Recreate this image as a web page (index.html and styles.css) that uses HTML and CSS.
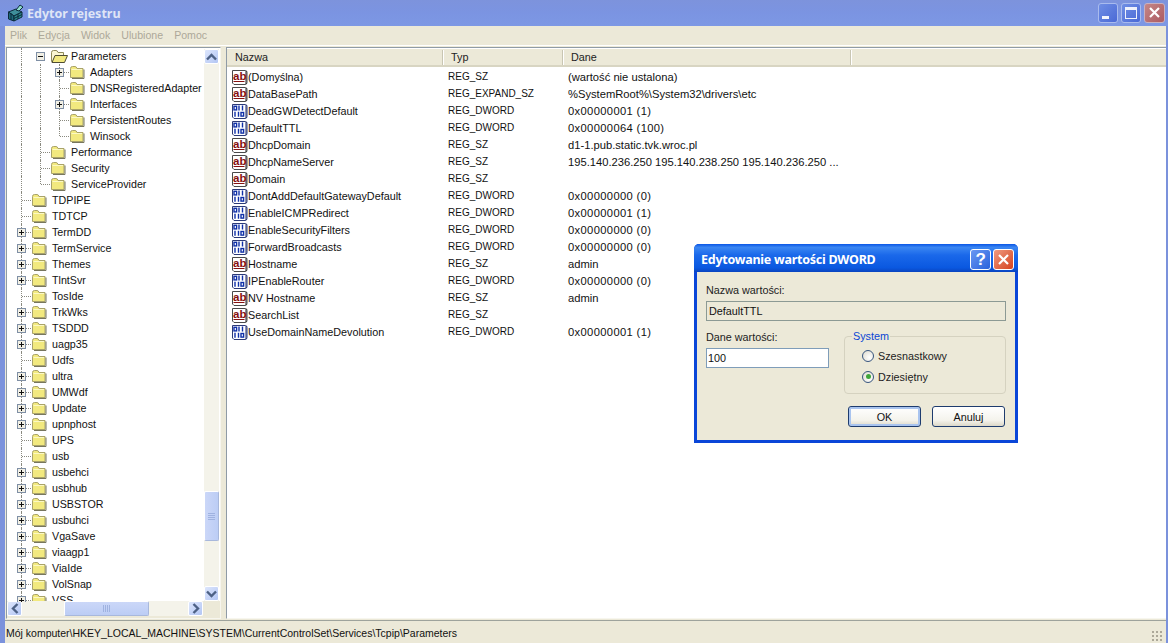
FILE: index.html
```html
<!DOCTYPE html>
<html lang="pl">
<head>
<meta charset="utf-8">
<title>Edytor rejestru</title>
<link rel="stylesheet" href="styles.css">
</head>
<body>
<svg class="defs" width="0" height="0" aria-hidden="true">
  <symbol id="folder" viewBox="0 0 17 16">
    <path d="M1.5 4.5 Q1.5 2.5 3.5 2.5 H6 Q7.5 2.5 8 4.5 H14 V13.5 H1.5 Z" fill="#f2e97f" stroke="#a9a36a"/>
    <path d="M2.5 5.5 H13" stroke="#fbf8c4"/>
    <path d="M15 5.5 V14.5 H3" stroke="#77765e" stroke-width="1" fill="none"/>
  </symbol>
  <symbol id="folder-open" viewBox="0 0 19 16">
    <path d="M1.5 4.5 Q1.5 2.5 3.5 2.5 H6 Q7.5 2.5 8 4.5 H13.5 V13.5 H1.5 Z" fill="#fbf7d2" stroke="#8f8a58"/>
    <path d="M2 14.5 L5 7.5 H17.5 L14.5 14.5 Z" fill="#f2e97f" stroke="#4e4c34"/>
  </symbol>
  <symbol id="reg-sz" viewBox="0 0 17 16">
    <path d="M1.5 1.5 H14.5 Q16 1.5 16 3.5 V13.5 Q16 15.5 14 15.5 H3 L1.5 14 Z" fill="#fff" stroke="#4a4a4a"/>
    <path d="M15 2 V15" stroke="#222"/>
    <text x="2" y="10.5" class="ab">ab</text>
    <path d="M2.5 12.5 H13.5" stroke="#86100f"/>
  </symbol>
  <symbol id="reg-dword" viewBox="0 0 17 16">
    <path d="M1.5 1.5 H14.5 Q16 1.5 16 3.5 V13.5 Q16 15.5 14 15.5 H3 L1.5 14 Z" fill="#fff" stroke="#2c3a78"/>
    <path d="M15 2 V15" stroke="#1c2a68"/>
    <g fill="none" stroke="#0f30a8" stroke-width="1.4">
      <rect x="3" y="3.3" width="2.6" height="3.6"/>
      <path d="M8 2.6 V7.6 M11.5 2.6 V7.6"/>
      <path d="M4 8.8 V13.8 M7.5 8.8 V13.8"/>
      <rect x="10" y="9.5" width="2.6" height="3.6"/>
    </g>
  </symbol>
  <symbol id="plus" viewBox="0 0 9 9">
    <rect x=".5" y=".5" width="8" height="8" fill="#f1efe4" stroke="#7f8fa5"/>
    <path d="M2 4.5 H7 M4.5 2 V7" stroke="#111"/>
  </symbol>
  <symbol id="minus" viewBox="0 0 9 9">
    <rect x=".5" y=".5" width="8" height="8" fill="#f1efe4" stroke="#7f8fa5"/>
    <path d="M2 4.5 H7" stroke="#111"/>
  </symbol>
  <symbol id="arrow-up" viewBox="0 0 11 8"><path d="M1 6.5 L5.5 2 L10 6.5" fill="none" stroke="#4d6185" stroke-width="2.4"/></symbol>
  <symbol id="arrow-down" viewBox="0 0 11 8"><path d="M1 1.5 L5.5 6 L10 1.5" fill="none" stroke="#4d6185" stroke-width="2.4"/></symbol>
  <symbol id="arrow-left" viewBox="0 0 8 11"><path d="M6.5 1 L2 5.5 L6.5 10" fill="none" stroke="#4d6185" stroke-width="2.4"/></symbol>
  <symbol id="arrow-right" viewBox="0 0 8 11"><path d="M1.5 1 L6 5.5 L1.5 10" fill="none" stroke="#4d6185" stroke-width="2.4"/></symbol>
</svg>

<div class="window">
  <header class="titlebar">
    <svg class="app-icon" width="18" height="18" viewBox="0 0 18 18">
      <path d="M1.5 8 L9 5 L15 8 L7 12 Z" fill="#3f8f9a" stroke="#0b2b3a"/>
      <path d="M1.5 8 V15 L7 17 V12 Z" fill="#1f6a7a" stroke="#0b2b3a"/>
      <path d="M7 12 V17 L15 13 V8 Z" fill="#2c8a8e" stroke="#0b2b3a"/>
      <path d="M4 9.5 V16 M11 10 V15 M7 14.5 L15 10.5" stroke="#0b2b3a" fill="none"/>
      <path d="M9 6 L13 1 L16 3 L12 7 Z" fill="#8fdccb" stroke="#0b2b3a"/>
    </svg>
    <span class="title-text">Edytor rejestru</span>
    <div class="win-btns">
      <span class="win-btn"><i class="glyph-min"></i></span>
      <span class="win-btn"><i class="glyph-max"></i></span>
      <span class="win-btn win-close">
        <svg width="13" height="13" viewBox="0 0 13 13"><path d="M2 2 L11 11 M11 2 L2 11" stroke="#fff" stroke-width="2.2"/></svg>
      </span>
    </div>
  </header>

  <nav class="menubar">
    <span>Plik</span><span>Edycja</span><span>Widok</span><span>Ulubione</span><span>Pomoc</span>
  </nav>

  <main class="panes">
    <section class="tree-pane">
      <div class="tree-main">
        <div class="tree">
          <div class="node"><i class="c v"></i><i class="c"><svg class="exp"><use href="#minus"/></svg></i><svg class="fo"><use href="#folder-open"/></svg><span class="label">Parameters</span></div>
          <div class="node"><i class="c v"></i><i class="c v"></i><i class="c t"><svg class="exp"><use href="#plus"/></svg></i><svg class="fi"><use href="#folder"/></svg><span class="label">Adapters</span></div>
          <div class="node"><i class="c v"></i><i class="c v"></i><i class="c t"></i><svg class="fi"><use href="#folder"/></svg><span class="label">DNSRegisteredAdapter</span></div>
          <div class="node"><i class="c v"></i><i class="c v"></i><i class="c t"><svg class="exp"><use href="#plus"/></svg></i><svg class="fi"><use href="#folder"/></svg><span class="label">Interfaces</span></div>
          <div class="node"><i class="c v"></i><i class="c v"></i><i class="c t"></i><svg class="fi"><use href="#folder"/></svg><span class="label">PersistentRoutes</span></div>
          <div class="node"><i class="c v"></i><i class="c v"></i><i class="c l"></i><svg class="fi"><use href="#folder"/></svg><span class="label">Winsock</span></div>
          <div class="node"><i class="c v"></i><i class="c t"></i><svg class="fi"><use href="#folder"/></svg><span class="label">Performance</span></div>
          <div class="node"><i class="c v"></i><i class="c t"></i><svg class="fi"><use href="#folder"/></svg><span class="label">Security</span></div>
          <div class="node"><i class="c v"></i><i class="c l"></i><svg class="fi"><use href="#folder"/></svg><span class="label">ServiceProvider</span></div>
          <div class="node"><i class="c t"></i><svg class="fi"><use href="#folder"/></svg><span class="label">TDPIPE</span></div>
          <div class="node"><i class="c t"></i><svg class="fi"><use href="#folder"/></svg><span class="label">TDTCP</span></div>
          <div class="node"><i class="c t"><svg class="exp"><use href="#plus"/></svg></i><svg class="fi"><use href="#folder"/></svg><span class="label">TermDD</span></div>
          <div class="node"><i class="c t"><svg class="exp"><use href="#plus"/></svg></i><svg class="fi"><use href="#folder"/></svg><span class="label">TermService</span></div>
          <div class="node"><i class="c t"><svg class="exp"><use href="#plus"/></svg></i><svg class="fi"><use href="#folder"/></svg><span class="label">Themes</span></div>
          <div class="node"><i class="c t"><svg class="exp"><use href="#plus"/></svg></i><svg class="fi"><use href="#folder"/></svg><span class="label">TlntSvr</span></div>
          <div class="node"><i class="c t"></i><svg class="fi"><use href="#folder"/></svg><span class="label">TosIde</span></div>
          <div class="node"><i class="c t"><svg class="exp"><use href="#plus"/></svg></i><svg class="fi"><use href="#folder"/></svg><span class="label">TrkWks</span></div>
          <div class="node"><i class="c t"><svg class="exp"><use href="#plus"/></svg></i><svg class="fi"><use href="#folder"/></svg><span class="label">TSDDD</span></div>
          <div class="node"><i class="c t"><svg class="exp"><use href="#plus"/></svg></i><svg class="fi"><use href="#folder"/></svg><span class="label">uagp35</span></div>
          <div class="node"><i class="c t"></i><svg class="fi"><use href="#folder"/></svg><span class="label">Udfs</span></div>
          <div class="node"><i class="c t"><svg class="exp"><use href="#plus"/></svg></i><svg class="fi"><use href="#folder"/></svg><span class="label">ultra</span></div>
          <div class="node"><i class="c t"><svg class="exp"><use href="#plus"/></svg></i><svg class="fi"><use href="#folder"/></svg><span class="label">UMWdf</span></div>
          <div class="node"><i class="c t"><svg class="exp"><use href="#plus"/></svg></i><svg class="fi"><use href="#folder"/></svg><span class="label">Update</span></div>
          <div class="node"><i class="c t"><svg class="exp"><use href="#plus"/></svg></i><svg class="fi"><use href="#folder"/></svg><span class="label">upnphost</span></div>
          <div class="node"><i class="c t"></i><svg class="fi"><use href="#folder"/></svg><span class="label">UPS</span></div>
          <div class="node"><i class="c t"></i><svg class="fi"><use href="#folder"/></svg><span class="label">usb</span></div>
          <div class="node"><i class="c t"><svg class="exp"><use href="#plus"/></svg></i><svg class="fi"><use href="#folder"/></svg><span class="label">usbehci</span></div>
          <div class="node"><i class="c t"><svg class="exp"><use href="#plus"/></svg></i><svg class="fi"><use href="#folder"/></svg><span class="label">usbhub</span></div>
          <div class="node"><i class="c t"><svg class="exp"><use href="#plus"/></svg></i><svg class="fi"><use href="#folder"/></svg><span class="label">USBSTOR</span></div>
          <div class="node"><i class="c t"><svg class="exp"><use href="#plus"/></svg></i><svg class="fi"><use href="#folder"/></svg><span class="label">usbuhci</span></div>
          <div class="node"><i class="c t"><svg class="exp"><use href="#plus"/></svg></i><svg class="fi"><use href="#folder"/></svg><span class="label">VgaSave</span></div>
          <div class="node"><i class="c t"><svg class="exp"><use href="#plus"/></svg></i><svg class="fi"><use href="#folder"/></svg><span class="label">viaagp1</span></div>
          <div class="node"><i class="c t"><svg class="exp"><use href="#plus"/></svg></i><svg class="fi"><use href="#folder"/></svg><span class="label">ViaIde</span></div>
          <div class="node"><i class="c t"><svg class="exp"><use href="#plus"/></svg></i><svg class="fi"><use href="#folder"/></svg><span class="label">VolSnap</span></div>
          <div class="node"><i class="c t"><svg class="exp"><use href="#plus"/></svg></i><svg class="fi"><use href="#folder"/></svg><span class="label">VSS</span></div>
        </div>
        <div class="vscroll">
          <span class="sb-btn"><svg width="11" height="8"><use href="#arrow-up"/></svg></span>
          <div class="vtrack"><span class="vthumb"><i></i><i></i><i></i><i></i></span></div>
          <span class="sb-btn"><svg width="11" height="8"><use href="#arrow-down"/></svg></span>
        </div>
      </div>
      <div class="hscroll-row">
        <div class="hscroll">
          <span class="sb-btn"><svg width="8" height="11"><use href="#arrow-left"/></svg></span>
          <div class="htrack"><span class="hthumb"><i></i><i></i><i></i><i></i></span></div>
          <span class="sb-btn"><svg width="8" height="11"><use href="#arrow-right"/></svg></span>
        </div>
      </div>
    </section>

    <section class="list-pane">
      <div class="list-head">
        <span class="h-name">Nazwa</span><span class="h-type">Typ</span><span class="h-data">Dane</span><span class="h-rest"></span>
      </div>
      <div class="list">
        <div class="item"><span class="name"><svg class="ri"><use href="#reg-sz"/></svg>(Domyślna)</span><span class="type">REG_SZ</span><span class="data">(wartość nie ustalona)</span></div>
        <div class="item"><span class="name"><svg class="ri"><use href="#reg-sz"/></svg>DataBasePath</span><span class="type">REG_EXPAND_SZ</span><span class="data">%SystemRoot%\System32\drivers\etc</span></div>
        <div class="item"><span class="name"><svg class="ri"><use href="#reg-dword"/></svg>DeadGWDetectDefault</span><span class="type">REG_DWORD</span><span class="data num">0x00000001 (1)</span></div>
        <div class="item"><span class="name"><svg class="ri"><use href="#reg-dword"/></svg>DefaultTTL</span><span class="type">REG_DWORD</span><span class="data num">0x00000064 (100)</span></div>
        <div class="item"><span class="name"><svg class="ri"><use href="#reg-sz"/></svg>DhcpDomain</span><span class="type">REG_SZ</span><span class="data">d1-1.pub.static.tvk.wroc.pl</span></div>
        <div class="item"><span class="name"><svg class="ri"><use href="#reg-sz"/></svg>DhcpNameServer</span><span class="type">REG_SZ</span><span class="data">195.140.236.250 195.140.238.250 195.140.236.250 ...</span></div>
        <div class="item"><span class="name"><svg class="ri"><use href="#reg-sz"/></svg>Domain</span><span class="type">REG_SZ</span><span class="data"></span></div>
        <div class="item"><span class="name"><svg class="ri"><use href="#reg-dword"/></svg>DontAddDefaultGatewayDefault</span><span class="type">REG_DWORD</span><span class="data num">0x00000000 (0)</span></div>
        <div class="item"><span class="name"><svg class="ri"><use href="#reg-dword"/></svg>EnableICMPRedirect</span><span class="type">REG_DWORD</span><span class="data num">0x00000001 (1)</span></div>
        <div class="item"><span class="name"><svg class="ri"><use href="#reg-dword"/></svg>EnableSecurityFilters</span><span class="type">REG_DWORD</span><span class="data num">0x00000000 (0)</span></div>
        <div class="item"><span class="name"><svg class="ri"><use href="#reg-dword"/></svg>ForwardBroadcasts</span><span class="type">REG_DWORD</span><span class="data num">0x00000000 (0)</span></div>
        <div class="item"><span class="name"><svg class="ri"><use href="#reg-sz"/></svg>Hostname</span><span class="type">REG_SZ</span><span class="data">admin</span></div>
        <div class="item"><span class="name"><svg class="ri"><use href="#reg-dword"/></svg>IPEnableRouter</span><span class="type">REG_DWORD</span><span class="data num">0x00000000 (0)</span></div>
        <div class="item"><span class="name"><svg class="ri"><use href="#reg-sz"/></svg>NV Hostname</span><span class="type">REG_SZ</span><span class="data">admin</span></div>
        <div class="item"><span class="name"><svg class="ri"><use href="#reg-sz"/></svg>SearchList</span><span class="type">REG_SZ</span><span class="data"></span></div>
        <div class="item"><span class="name"><svg class="ri"><use href="#reg-dword"/></svg>UseDomainNameDevolution</span><span class="type">REG_DWORD</span><span class="data num">0x00000001 (1)</span></div>
      </div>
    </section>
  </main>

  <footer class="statusbar">
    <span>Mój komputer\HKEY_LOCAL_MACHINE\SYSTEM\CurrentControlSet\Services\Tcpip\Parameters</span>
    <i class="grip"></i>
  </footer>
</div>

<div class="dialog">
  <header class="dlg-title">
    <span>Edytowanie wartości DWORD</span>
    <div class="dlg-btns">
      <span class="dlg-btn dlg-help">?</span>
      <span class="dlg-btn dlg-close">
        <svg width="13" height="13" viewBox="0 0 13 13"><path d="M2 2 L11 11 M11 2 L2 11" stroke="#fff" stroke-width="2.2"/></svg>
      </span>
    </div>
  </header>
  <div class="dlg-body">
    <div class="dlg-label">Nazwa wartości:</div>
    <div class="field field-ro">DefaultTTL</div>
    <div class="dlg-split">
      <div class="dlg-data">
        <div class="dlg-label">Dane wartości:</div>
        <div class="field field-edit">100</div>
      </div>
      <fieldset class="group">
        <legend>System</legend>
        <div class="radio"><i class="dot"></i>Szesnastkowy</div>
        <div class="radio"><i class="dot dot-on"></i>Dziesiętny</div>
      </fieldset>
    </div>
    <div class="dlg-actions">
      <span class="btn btn-default"><span>OK</span></span>
      <span class="btn"><span>Anuluj</span></span>
    </div>
  </div>
</div>
</body>
</html>
```
FILE: styles.css
```css
* { box-sizing: border-box; }
html, body { margin: 0; height: 100%; }
body {
  width: 1168px;
  height: 643px;
  overflow: hidden;
  position: relative;
  font: 11px/16px "Liberation Sans", Arial, sans-serif;
  color: #111;
  background: #ece9d8;
}
i { font-style: normal; display: block; }
.defs { position: absolute; }
.ab { font: bold 11.5px "Liberation Sans", sans-serif; fill: #86100f; }

.window {
  height: 643px;
  display: flex;
  flex-direction: column;
  border-left: 5px solid #7b92dc;
  border-right: 2px solid #7b92dc;
}
.titlebar {
  height: 26px;
  margin: 0 -2px 0 -5px;
  padding: 0 3px 0 7px;
  display: flex;
  align-items: center;
  background: linear-gradient(#7d93dc, #7b94e2 50%, #7d98e4);
}
.app-icon { margin-right: 2px; }
.title-text {
  font: bold 12.5px/16px "Noto Sans", sans-serif;
  color: #dfe5f6;
  margin-top: 1px;
}
.win-btns { margin-left: auto; display: flex; gap: 3px; margin-top: -1px; }
.win-btn {
  width: 20px;
  height: 20px;
  border: 1px solid #a9bbee;
  border-radius: 3px;
  background: linear-gradient(135deg, #6f8ee4, #4a69d6);
  display: flex;
  align-items: center;
  justify-content: center;
  position: relative;
}
.win-close { width: 21px; background: linear-gradient(135deg, #c58686, #ac5b62); border-color: #c8b0c0; }
.glyph-min { width: 7px; height: 3px; background: #f2f4fc; margin: 9px 6px 0 0; }
.glyph-max { width: 12px; height: 12px; border: 1px solid #eef1fb; border-top-width: 3px; }

.menubar {
  height: 19px;
  display: flex;
  gap: 11px;
  padding: 1px 0 0 5px;
  background: #ece9d8;
  color: #aca899;
  font-size: 10.6px;
  flex: none;
}
.panes {
  flex: 1;
  min-height: 0;
  display: flex;
  gap: 5px;
  padding: 1px 0 1px 1px;
  background: #ece9d8;
  border-top: 1px solid #fff;
}

/* tree */
.tree-pane {
  width: 215px;
  flex: none;
  display: flex;
  flex-direction: column;
  border: 1px solid #8f9ba6;
  border-right-color: #f7f6ee;
  border-bottom-color: #f7f6ee;
  background: #fff;
}
.tree-main { flex: 1; min-height: 0; display: flex; }
.tree {
  width: 197px;
  flex: none;
  overflow: hidden;
  padding: 0 0 0 5px;
  height: 554px;
  font-size: 10.7px;
}
.node { height: 16px; display: flex; align-items: center; white-space: nowrap; }
.c { width: 19px; height: 16px; flex: none; position: relative; display: flex; align-items: center; justify-content: center; }
.c.v::before, .c.t::before, .c.l::before {
  content: "";
  position: absolute;
  left: 9px;
  top: 0;
  height: 100%;
  border-left: 1px dotted #8a8a80;
}
.c.l::before { height: 8px; }
.c.t::after, .c.l::after {
  content: "";
  position: absolute;
  left: 10px;
  top: 8px;
  width: 9px;
  border-top: 1px dotted #8a8a80;
}
.exp { width: 9px; height: 9px; position: relative; z-index: 1; flex: none; }
.fi { width: 17px; height: 16px; flex: none; }
.fo { width: 19px; height: 16px; flex: none; margin-right: -2px; }
.label { padding-left: 4px; }

.vscroll {
  width: 15px;
  flex: none;
  display: flex;
  flex-direction: column;
  background: #f4f3ea;
  margin-top: 1px;
}
.sb-btn {
  width: 15px;
  height: 15px;
  flex: none;
  border: 1px solid #fff;
  border-radius: 2px;
  background: linear-gradient(135deg, #dde6fc, #b3c6f4);
  display: flex;
  align-items: center;
  justify-content: center;
}
.vtrack { flex: 1; position: relative; display: flex; flex-direction: column; justify-content: flex-end; padding-bottom: 45px; }
.vthumb, .hthumb {
  display: flex;
  background: linear-gradient(90deg, #cbd7f8, #bccdf5);
  border: 1px solid #fff;
  border-right-color: #a8b8dc;
  border-bottom-color: #a8b8dc;
  border-radius: 2px;
  align-items: center;
  justify-content: center;
}
.vthumb { height: 50px; flex-direction: column; gap: 1px; }
.vthumb i { width: 7px; height: 1px; background: #9fb2e0; }
.hthumb { width: 85px; height: 15px; gap: 1px; margin-left: 42px; background: linear-gradient(#cbd7f8, #bccdf5); }
.hthumb i { width: 1px; height: 7px; background: #9fb2e0; }

.hscroll-row { height: 17px; flex: none; background: #ece9d8; display: flex; }
.hscroll { width: 196px; height: 15px; display: flex; background: #f4f3ea; }
.htrack { flex: 1; }

/* list */
.list-pane {
  flex: 1;
  min-width: 0;
  border: 1px solid #8f9ba6;
  border-right: 0;
  border-bottom-color: #f7f6ee;
  background: #fff;
  font-size: 10.8px;
}
.list-head {
  height: 19px;
  display: flex;
  align-items: center;
  background: #ece9d8;
  color: #222;
  border-top: 1px solid #fff;
  border-bottom: 2px solid #d8d5c2;
}
.list-head span { height: 15px; line-height: 15px; border-right: 1px solid #c9c6b3; box-shadow: 1px 0 0 #fff; padding-left: 8px; flex: none; }
.h-name { width: 216px; }
.list-head .h-type { width: 120px; padding-left: 8px; }
.list-head .h-data { width: 288px; padding-left: 8px; }
.list-head .h-rest { border-right: 0; box-shadow: none; flex: 1; }
.list { padding-top: 1px; }
.item { height: 17px; display: flex; align-items: center; white-space: nowrap; color: #111; padding-left: 4px; }
.name { width: 217px; display: flex; align-items: center; flex: none; }
.ri { width: 17px; height: 16px; flex: none; }
.type { width: 120px; flex: none; font-size: 10px; padding-top: 1px; }
.data { flex: none; font-size: 11.2px; }
.num { letter-spacing: 0.35px; }

.statusbar {
  height: 23px;
  flex: none;
  display: flex;
  align-items: center;
  padding: 1px 2px 0 1px;
  border-top: 1px solid #9ea39c;
  background: #ece9d8;
  color: #111;
  font-size: 10.5px;
}
.grip {
  margin-left: auto;
  width: 12px;
  height: 12px;
  align-self: flex-end;
  background: radial-gradient(circle at 1px 1px, #aca899 1px, transparent 1.2px) 0 0 / 4px 4px;
}

/* dialog */
.dialog {
  position: absolute;
  left: 694px;
  top: 244px;
  width: 324px;
  height: 199px;
  display: flex;
  flex-direction: column;
  background: #0a46d8;
  padding: 0 3px 3px;
  border-radius: 5px 5px 0 0;
}
.dlg-title {
  height: 28px;
  flex: none;
  margin: 0 -3px;
  padding: 0 4px 0 7px;
  display: flex;
  align-items: center;
  border-radius: 5px 5px 0 0;
  background: linear-gradient(#0a56e6 0, #3a86f2 12%, #1a68ea 40%, #0a58e0 85%, #0a44bf);
  font: bold 12.5px/16px "Noto Sans", sans-serif;
  letter-spacing: -0.25px;
  color: #fff;
}
.dlg-title > span { margin-top: 4px; }
.dlg-btns { margin-left: auto; display: flex; gap: 2px; margin-top: 2px; }
.dlg-btn {
  width: 21px;
  height: 21px;
  border: 1px solid #fff;
  border-radius: 3px;
  display: flex;
  align-items: center;
  justify-content: center;
}
.dlg-help {
  background: linear-gradient(135deg, #6a98f2, #2a62dc);
  font: bold 17px/1 "Liberation Sans", sans-serif;
  color: #fff;
}
.dlg-close { background: linear-gradient(135deg, #ee9a80, #d6431f); }
.dlg-body {
  flex: 1;
  background: #ece9d8;
  padding: 10px 9px 0;
  display: flex;
  flex-direction: column;
  color: #222;
  font-size: 10.8px;
}
.dlg-label { height: 16px; line-height: 16px; }
.field {
  height: 20px;
  line-height: 18px;
  border: 1px solid #7f9db9;
  padding-left: 2px;
  color: #111;
}
.field-ro { width: 300px; margin-top: 3px; border-color: #8c9a94; background: #ece9d8; }
.dlg-split { display: flex; margin-top: 8px; height: 64px; }
.dlg-data { width: 123px; flex: none; }
.dlg-data .dlg-label { margin-bottom: 3px; }
.field-edit { width: 123px; background: #fff; padding-left: 1px; }
.group {
  position: relative;
  top: 7px;
  margin: -6px 0 0 15px;
  width: 162px;
  height: 64px;
  padding: 3px 0 0 17px;
  border: 1px solid #d5d2c0;
  border-radius: 4px;
  min-width: 0;
}
.group legend { color: #0a46d5; padding: 0 1px; margin-left: -10px; line-height: 12px; height: 12px; }
.radio { display: flex; align-items: center; height: 21px; gap: 4px; }
.dot {
  width: 12px;
  height: 12px;
  flex: none;
  border-radius: 50%;
  border: 1px solid #37557f;
  background: radial-gradient(circle at 65% 65%, #fff, #dcd9cc);
  display: flex;
  align-items: center;
  justify-content: center;
}
.dot-on::after { content: ""; width: 5px; height: 5px; border-radius: 50%; background: #3fa63a; }
.dlg-actions { display: flex; justify-content: flex-end; gap: 11px; margin-top: 13px; padding-right: 1px; }
.btn {
  width: 73px;
  height: 21px;
  border: 1px solid #1e3c6e;
  border-radius: 3px;
  background: linear-gradient(#fff, #f4f3ec 70%, #dcd8c8);
  display: flex;
  align-items: center;
  justify-content: center;
  color: #111;
}
.btn-default { box-shadow: inset 0 0 0 2px #a9c4ef; }
```
